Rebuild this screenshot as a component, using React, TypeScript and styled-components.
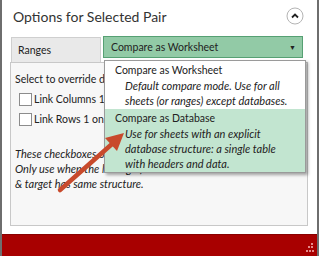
import styled, { createGlobalStyle } from "styled-components";

const GlobalStyle = createGlobalStyle`
  html, body {
    margin: 0;
    padding: 0;
    background: #ffffff;
  }
  * {
    box-sizing: border-box;
  }
`;

const modes = [
  {
    title: "Compare as Worksheet",
    lines: ["Default compare mode. Use for all", "sheets (or ranges) except databases."],
  },
  {
    title: "Compare as Database",
    lines: [
      "Use for sheets with an explicit",
      "database structure: a single table",
      "with headers and data.",
    ],
  },
];

const App = () => {
  return (
    <>
      <GlobalStyle />
      <Frame>
        <Content>
          <Header>
            <Title>Options for Selected Pair</Title>
            <CollapseButton>
              <svg width="18" height="18" viewBox="0 0 18 18">
                <circle cx="9" cy="9" r="8" fill="#fff" stroke="#b4b4b4" />
                <path d="M6 10.5 L9 7.5 L12 10.5" fill="none" stroke="#222" strokeWidth="1.8" />
              </svg>
            </CollapseButton>
          </Header>

          <TabRow>
            <RangesTab>Ranges</RangesTab>
            <DropWrap>
              <Dropdown>
                <span>Compare as Worksheet</span>
                <Caret>▼</Caret>
              </Dropdown>
              <Menu>
                {modes.map((m, i) => (
                  <MenuItem key={m.title} $active={i === 1}>
                    <ItemTitle>{m.title}</ItemTitle>
                    {m.lines.map((l) => (
                      <ItemNote key={l}>{l}</ItemNote>
                    ))}
                  </MenuItem>
                ))}
              </Menu>
            </DropWrap>
          </TabRow>

          <Panel>
            <PanelText>Select to override default linking</PanelText>
            <CheckRow>
              <Box />
              <span>Link Columns 1 on 1</span>
            </CheckRow>
            <CheckRow>
              <Box />
              <span>Link Rows 1 on 1</span>
            </CheckRow>
            <Note>
              These checkboxes override the automatic linking.
              <br />
              Only use when the linking of source
              <br />
              &amp; target has same structure.
            </Note>
          </Panel>
        </Content>

        <Footer>
          <Grip width="8" height="10" viewBox="0 0 8 10">
            <rect x="5" y="0" width="2" height="2" />
            <rect x="2" y="3" width="2" height="2" />
            <rect x="5" y="3" width="2" height="2" />
            <rect x="0" y="7" width="2" height="2" />
            <rect x="3" y="7" width="2" height="2" />
            <rect x="6" y="7" width="2" height="2" />
          </Grip>
        </Footer>

        <Arrow width="319" height="256" viewBox="0 0 319 256">
          <line x1="60" y1="190" x2="112" y2="144" stroke="#c84a2c" strokeWidth="4.5" strokeLinecap="round" />
          <polygon points="124,133 117,151 105,138" fill="#c84a2c" />
        </Arrow>
      </Frame>
    </>
  );
};

const Frame = styled.div`
  position: relative;
  width: 319px;
  height: 256px;
  display: flex;
  flex-direction: column;
  border-left: 2px solid #6e6e6e;
  border-right: 2px solid #6e6e6e;
  font-family: Lato, "Open Sans", sans-serif;
  font-size: 10.5px;
  color: #222;
  overflow: hidden;
`;

const Content = styled.div`
  flex: 1;
  padding: 0 9px 0 8px;
  display: flex;
  flex-direction: column;
`;

const Header = styled.div`
  height: 32px;
  display: flex;
  align-items: center;
  justify-content: space-between;
`;

const Title = styled.span`
  margin-left: 3px;
  font-size: 14px;
  color: #333;
`;

const CollapseButton = styled.div`
  width: 18px;
  height: 18px;
  margin-right: 4px;
  display: flex;
`;

const TabRow = styled.div`
  margin-top: 4px;
  display: flex;
  align-items: flex-start;
  gap: 2px;
  height: 26px;
`;

const RangesTab = styled.div`
  margin-left: 1px;
  margin-top: 1px;
  width: 90px;
  height: 25px;
  background: #e9e9e9;
  border: 1px solid #cfcfcf;
  border-bottom: none;
  display: flex;
  align-items: center;
  padding-left: 6px;
`;

const DropWrap = styled.div`
  position: relative;
  width: 200px;
`;

const Dropdown = styled.div`
  height: 22px;
  background: #92caa6;
  border: 1px solid #56a073;
  display: flex;
  align-items: center;
  justify-content: space-between;
  padding: 0 6px 0 7px;
`;

const Caret = styled.span`
  font-size: 7px;
`;

const Menu = styled.div`
  position: absolute;
  z-index: 2;
  top: 24px;
  left: 1px;
  width: 202px;
  background: #fff;
  border: 1px solid #9a9a9a;
  box-shadow: 2px 2px 3px rgba(0, 0, 0, 0.35);
`;

const MenuItem = styled.div<{ $active?: boolean }>`
  padding: 2px 0 1px 10px;
  background: ${(p) => (p.$active ? "#c2e5d0" : "#ffffff")};
  line-height: 15px;
`;

const ItemTitle = styled.div``;

const ItemNote = styled.div`
  font-style: italic;
  font-size: 11px;
  padding-left: 10px;
`;

const Panel = styled.div`
  height: 164px;
  background: #f7f7f7;
  border: 1px solid #c8c8c8;
  padding: 9px 4px;
  line-height: 15px;
`;

const PanelText = styled.div`
  white-space: nowrap;
`;

const CheckRow = styled.div`
  margin-top: 4px;
  height: 16px;
  display: flex;
  align-items: center;
  gap: 2px;
  padding-left: 4px;
  white-space: nowrap;
`;

const Box = styled.span`
  width: 13px;
  height: 13px;
  background: #fff;
  border: 1px solid #8c8c8c;
`;

const Note = styled.div`
  margin-top: 19px;
  font-style: italic;
  font-size: 11px;
  white-space: nowrap;
`;

const Footer = styled.div`
  margin-top: 8px;
  height: 22px;
  background: #a80000;
  border-top: 1px solid #8a0000;
  display: flex;
  justify-content: flex-end;
  align-items: flex-end;
  padding: 0 3px 3px 0;
`;

const Grip = styled.svg`
  fill: #e68a8a;
`;

const Arrow = styled.svg`
  position: absolute;
  left: -2px;
  top: 0;
  pointer-events: none;
  z-index: 3;
`;

export default App;
